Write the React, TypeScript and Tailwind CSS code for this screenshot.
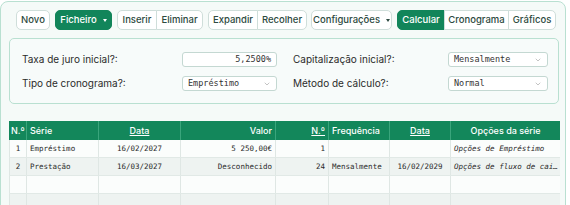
import { ChevronDown } from "lucide-react";

const mono = "font-['DejaVu_Sans_Mono',monospace]";

function Btn({ label, first, last, active, caret, solo }: { label: string; first?: boolean; last?: boolean; active?: boolean; caret?: boolean; solo?: boolean }) {
  const round = solo ? "rounded-[5px]" : first ? "rounded-l-[5px]" : last ? "rounded-r-[5px]" : "";
  return (
    <div
      className={`flex h-[20px] items-center justify-center gap-[6px] border text-[9.5px] font-medium ${round} ${
        active ? "border-[#12855a] bg-[#12855a] text-white" : "border-[#cfdeda] bg-white text-[#2d4a40]"
      } ${!first && !solo ? "-ml-px" : ""}`}
    >
      {label}
      {caret && <span className="mt-[1px] border-x-[2.5px] border-t-[3px] border-x-transparent border-t-current" />}
    </div>
  );
}

function Field({ value, select, align }: { value: string; select?: boolean; align?: string }) {
  return (
    <div className={`flex h-[15px] items-center rounded-[3px] border border-[#c4d8d2] bg-white px-[5px] ${mono} text-[8.5px] text-[#333]`}>
      <span className={`flex-1 ${align ?? ""}`}>{value}</span>
      {select && <ChevronDown size={8} strokeWidth={1.5} className="text-[#888]" />}
    </div>
  );
}

const cols = [
  { h: "N.º", w: "w-[17px]", a: "text-center", ha: "text-left pl-[2px]" },
  { h: "Série", w: "w-[72px]", a: "text-left pl-[3px]", ha: "text-left pl-[3px]" },
  { h: "Data", w: "w-[82px]", a: "text-center", ha: "text-center underline" },
  { h: "Valor", w: "w-[95px]", a: "text-right pr-[3px]", ha: "text-right pr-[3px]" },
  { h: "N.º", w: "w-[53px]", a: "text-right pr-[3px]", ha: "text-right pr-[3px] underline" },
  { h: "Frequência", w: "w-[61px]", a: "text-left pl-[3px]", ha: "text-left pl-[3px]" },
  { h: "Data", w: "w-[61px]", a: "text-center", ha: "text-center underline" },
  { h: "Opções da série", w: "w-[110px]", a: "text-left pl-[3px] italic", ha: "text-center" },
];

const rows = [
  ["1", "Empréstimo", "16/02/2027", "5 250,00€", "1", "", "", "Opções de Empréstimo"],
  ["2", "Prestação", "16/03/2027", "Desconhecido", "24", "Mensalmente", "16/02/2029", "Opções de fluxo de cai…"],
  ["", "", "", "", "", "", "", ""],
  ["", "", "", "", "", "", "", ""],
];

export default function App() {
  return (
    <div className="h-[205px] w-[570px] overflow-hidden bg-white font-['Inter',sans-serif]">
      <div className="mt-px h-[230px] w-[566px] rounded-lg border border-[#b9e0d1] bg-[#f5faf8] pl-[8px] pt-[8px]">
        <div className="flex gap-[5px] pl-[7px]">
          <div className="w-[34px]"><Btn label="Novo" solo /></div>
          <div className="w-[57px]"><Btn label="Ficheiro" solo active caret /></div>
          <div className="flex">
            <div className="w-[40px]"><Btn label="Inserir" first /></div>
            <div className="w-[46px]"><Btn label="Eliminar" last /></div>
          </div>
          <div className="flex">
            <div className="w-[50px]"><Btn label="Expandir" first /></div>
            <div className="w-[49px]"><Btn label="Recolher" last /></div>
          </div>
          <div className="-ml-px w-[81px]"><Btn label="Configurações" solo caret /></div>
          <div className="flex">
            <div className="w-[48px]"><Btn label="Calcular" first active /></div>
            <div className="w-[64px]"><Btn label="Cronograma" /></div>
            <div className="w-[47px]"><Btn label="Gráficos" last /></div>
          </div>
        </div>

        <div className="mt-[8px] grid w-[550px] grid-cols-2 gap-x-[16px] gap-y-[9px] rounded-[5px] border border-[#b9e0d1] bg-[#f7fbfa] pb-[12px] pl-[12px] pr-[10px] pt-[13px] text-[10px] text-[#2b2b2b]">
          <div className="flex items-center">
            <span className="flex-1">Taxa de juro inicial?:</span>
            <div className="w-[95px]"><Field value="5,2500%" align="text-right" /></div>
          </div>
          <div className="flex items-center">
            <span className="flex-1">Capitalização inicial?:</span>
            <div className="w-[100px]"><Field value="Mensalmente" select /></div>
          </div>
          <div className="flex items-center">
            <span className="flex-1">Tipo de cronograma?:</span>
            <div className="w-[95px]"><Field value="Empréstimo" select /></div>
          </div>
          <div className="flex items-center">
            <span className="flex-1">Método de cálculo?:</span>
            <div className="w-[100px]"><Field value="Normal" select /></div>
          </div>
        </div>

        <div className="mt-[17px] w-[551px]">
          <div className="flex h-[19px] bg-[#13875b] text-[9px] font-medium text-white">
            {cols.map((c, i) => (
              <div key={i} className={`${c.w} ${c.ha} flex-none self-center border-l border-[#3aa57c] first:border-l-0 leading-[19px]`}>
                {c.h}
              </div>
            ))}
          </div>
          {rows.map((r, ri) => (
            <div key={ri} className={`flex h-[18px] border-b border-[#e1e9e6] ${ri % 2 ? "bg-[#eef3f1]" : "bg-[#fbfdfc]"} ${mono} text-[7.5px] text-[#2a2a2a]`}>
              {r.map((v, ci) => (
                <div key={ci} className={`${cols[ci].w} ${cols[ci].a} flex-none overflow-hidden whitespace-nowrap border-l border-[#dfe7e4] leading-[18px]`}>
                  {v}
                </div>
              ))}
            </div>
          ))}
        </div>
      </div>
    </div>
  );
}
